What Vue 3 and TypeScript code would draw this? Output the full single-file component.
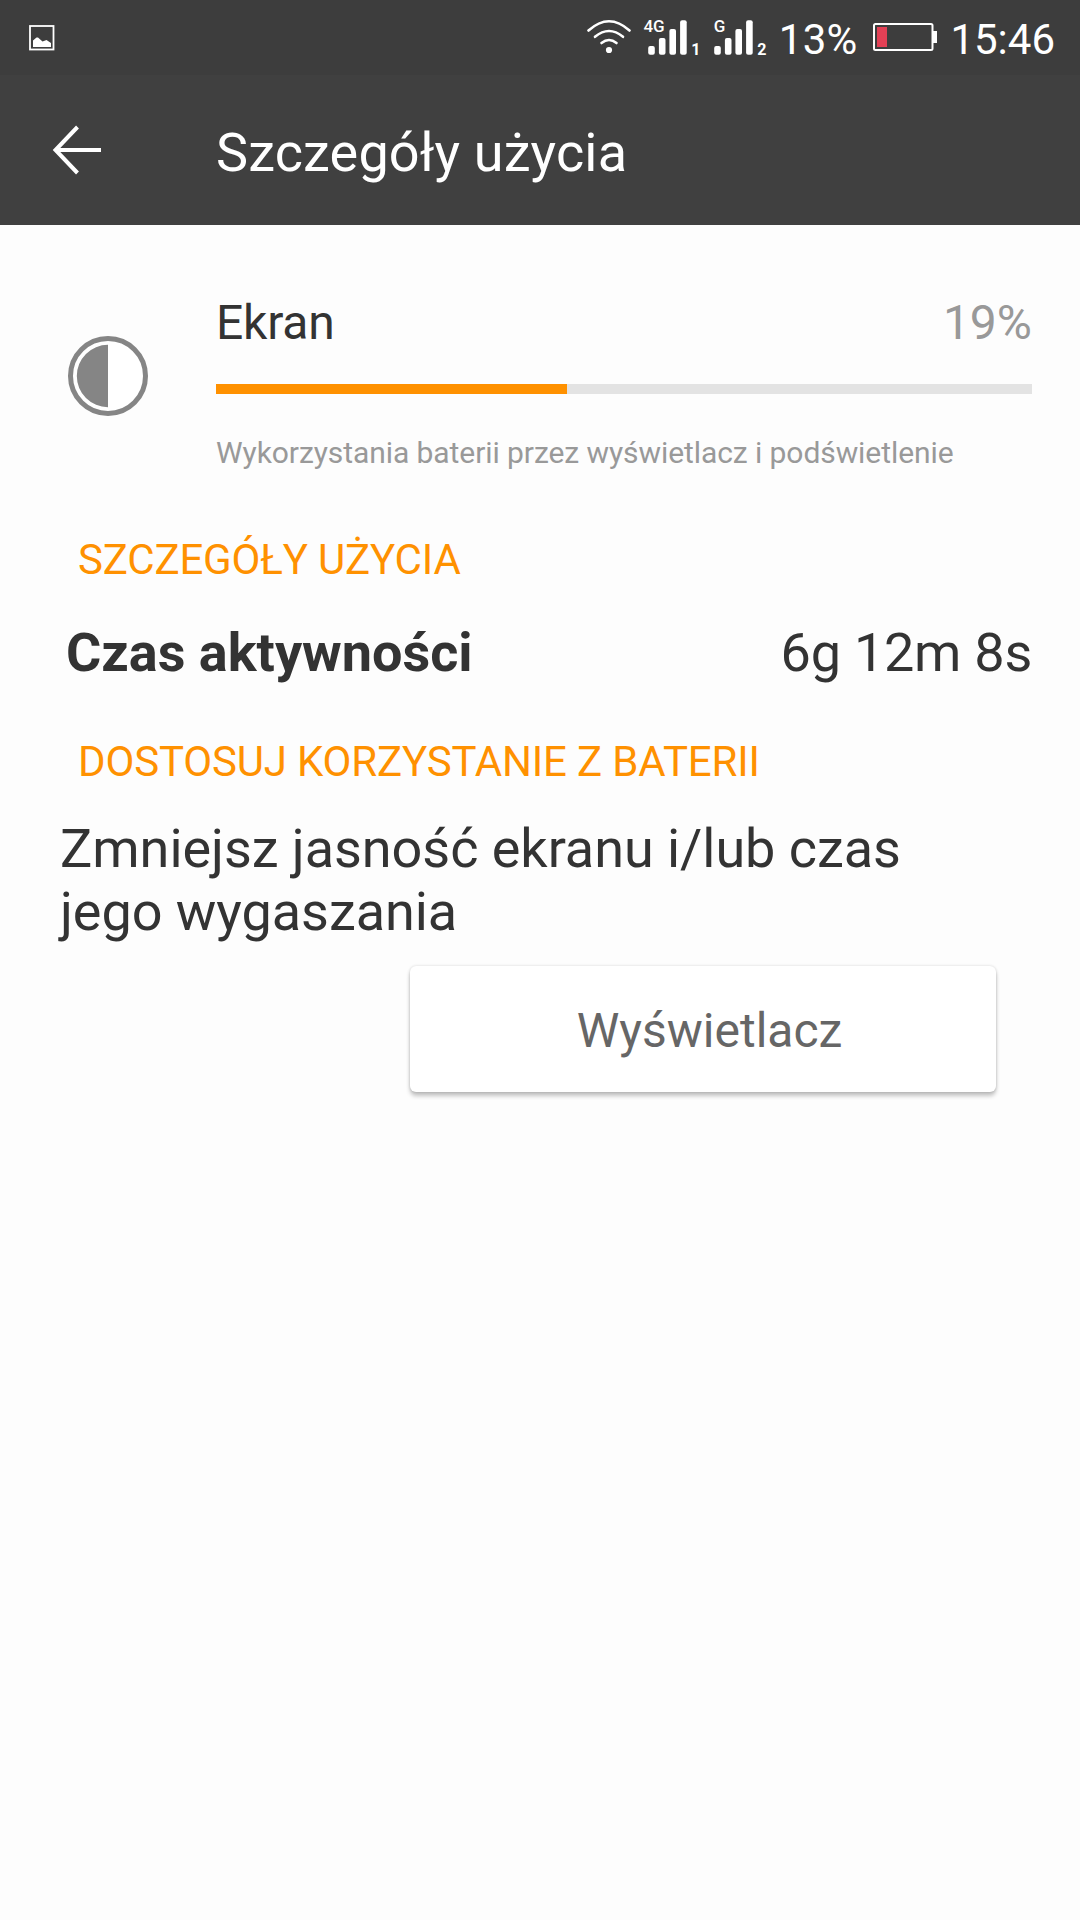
<script setup lang="ts">
interface Signal {
  network: string
  slot: string
}

const signals: Signal[] = [
  { network: '4G', slot: '1' },
  { network: 'G', slot: '2' },
]

const usage = { name: 'Ekran', percent: 19, barFill: 43 }
</script>

<template>
  <div class="screen">
    <div class="status-bar">
      <svg class="picture-icon" width="26" height="26" viewBox="0 0 26 26">
        <rect x="1" y="1" width="23.5" height="23.5" fill="none" stroke="#fff" stroke-width="1.8" />
        <path d="M4 22V15.5L7.5 12.5L9 12.5L13.5 16.5L17.5 15L22 18V22Z" fill="#fff" />
      </svg>
      <div class="status-right">
        <svg class="wifi" width="46" height="36" viewBox="0 0 46 36">
          <g fill="none" stroke="#fff" stroke-width="2.6" stroke-linecap="round">
            <path d="M2.5 11.5Q23 -7 43.5 11.5" />
            <path d="M9 17.8Q23 6.2 37 17.8" />
            <path d="M15.5 24Q23 18 30.5 24" />
          </g>
          <circle cx="23" cy="31" r="3.1" fill="#fff" />
        </svg>
        <svg
          v-for="signal in signals"
          :key="signal.slot"
          class="signal"
          width="66"
          height="56"
          viewBox="0 -10 66 56"
        >
          <g fill="#fff">
            <rect x="11.2" y="27" width="6.6" height="8.7" rx="2" />
            <rect x="21.9" y="19" width="6.6" height="16.7" rx="2" />
            <rect x="32.4" y="10" width="6.6" height="25.7" rx="2" />
            <rect x="43.1" y="1.2" width="6.6" height="34.5" rx="2" />
          </g>
          <text :x="signal.network === 'G' ? 10.8 : 6.4" y="13.2" class="network">{{ signal.network }}</text>
          <text x="54.3" y="35.7" class="slot">{{ signal.slot }}</text>
        </svg>
        <span class="level">13%</span>
        <svg class="battery" width="66" height="30" viewBox="0 0 66 30">
          <rect x="1" y="2" width="58.5" height="26" rx="1.5" fill="none" stroke="#fff" stroke-width="2" />
          <rect x="60" y="9" width="4" height="12" fill="#fff" />
          <rect x="4" y="5" width="10" height="20" fill="#e34055" />
        </svg>
        <span class="clock">15:46</span>
      </div>
    </div>

    <header class="app-bar">
      <svg class="back" width="52" height="52" viewBox="0 0 52 52">
        <path d="M27.5 3L5.5 26L27.5 49M5 26H51" fill="none" stroke="#fff" stroke-width="4" />
      </svg>
      <h1>Szczegóły użycia</h1>
    </header>

    <main>
      <section class="usage">
        <svg class="brightness" width="82" height="82" viewBox="0 0 82 82">
          <circle cx="41" cy="41" r="37.5" fill="#fff" stroke="#858585" stroke-width="5" />
          <path d="M41 9.8A31.2 31.2 0 0 0 41 72.2Z" fill="#858585" />
        </svg>
        <div class="usage-body">
          <div class="usage-head">
            <span class="usage-name">{{ usage.name }}</span>
            <span class="usage-percent">{{ usage.percent }}%</span>
          </div>
          <div class="track"><div class="fill" :style="{ width: usage.barFill + '%' }"></div></div>
          <p class="summary">Wykorzystania baterii przez wyświetlacz i podświetlenie</p>
        </div>
      </section>

      <h2>SZCZEGÓŁY UŻYCIA</h2>
      <div class="detail">
        <strong>Czas aktywności</strong>
        <span class="duration">6g 12m 8s</span>
      </div>

      <h2 class="adjust">DOSTOSUJ KORZYSTANIE Z BATERII</h2>
      <p class="tip">Zmniejsz jasność ekranu i/lub czas jego wygaszania</p>
      <button type="button">Wyświetlacz</button>
    </main>
  </div>
</template>

<style>
body {
  background: #fdfdfd;
}
</style>

<style scoped>
.screen {
  min-height: 1920px;
  background: #fdfdfd;
  color: #333;
  font-family: Roboto, "Noto Sans", sans-serif;
  overflow: hidden;
}
h1, h2, p {
  margin: 0;
  font-weight: 400;
}
svg {
  display: block;
  flex: none;
}
.status-bar {
  display: flex;
  justify-content: space-between;
  height: 75px;
  box-sizing: border-box;
  padding: 0 25px 0 29px;
  background: #3d3d3d;
  color: #fff;
}
.picture-icon {
  margin-top: 25px;
}
.status-right {
  display: flex;
  font-size: 42px;
  line-height: 80px;
  white-space: nowrap;
}
.wifi {
  margin-top: 19px;
  margin-right: 5px;
}
.signal {
  margin-top: 9px;
}
.network,
.slot {
  fill: #fff;
  font-size: 17px;
  font-weight: 500;
  line-height: 18px;
}
.slot {
  font-size: 16px;
  font-weight: 700;
}
.level {
  margin-left: 10px;
  letter-spacing: 0.2px;
}
.battery {
  margin: 22px 11px 0 16px;
}
.app-bar {
  display: flex;
  height: 150px;
  background: #404040;
  color: #fff;
}
.back {
  margin: 49px 114px 0 50px;
}
h1 {
  font-size: 54px;
  letter-spacing: 0.14px;
  line-height: 155px;
}
.usage {
  display: flex;
  padding: 70px 48px 0 67px;
}
.brightness {
  margin: 40px 67px 0 0;
}
.usage-body {
  flex: 1;
}
.usage-head {
  display: flex;
  justify-content: space-between;
  font-size: 48px;
  line-height: 56px;
}
.usage-name {
  letter-spacing: -0.2px;
}
.usage-percent {
  color: #999;
}
.track {
  height: 10px;
  margin-top: 33px;
  background: #e3e3e3;
}
.fill {
  height: 10px;
  background: #ff9100;
}
.summary {
  margin-top: 41px;
  color: #999;
  font-size: 30px;
  letter-spacing: -0.075px;
  line-height: 36px;
}
h2 {
  margin: 64px 0 0 78px;
  color: #ff9100;
  font-size: 42px;
  letter-spacing: -0.165px;
  line-height: 50px;
}
.detail {
  display: flex;
  justify-content: space-between;
  margin: 36px 48px 0 66px;
  font-size: 54px;
  line-height: 64px;
}
.detail strong {
  font-weight: 700;
}
.duration {
  letter-spacing: -0.26px;
}
.adjust {
  margin-top: 52px;
}
.tip {
  width: 900px;
  margin: 30px 0 0 60px;
  font-size: 54px;
  letter-spacing: -0.05px;
  line-height: 63px;
}
button {
  display: block;
  width: 586px;
  height: 126px;
  margin: 23px 0 0 410px;
  padding: 3px 0 0 13px;
  border: 0;
  border-radius: 6px;
  background: #fff;
  box-shadow: 0 4px 4px rgba(0, 0, 0, 0.23), 0 0 3px rgba(0, 0, 0, 0.16);
  color: #666;
  font: 400 48px/56px Roboto, "Noto Sans", sans-serif;
}
</style>
